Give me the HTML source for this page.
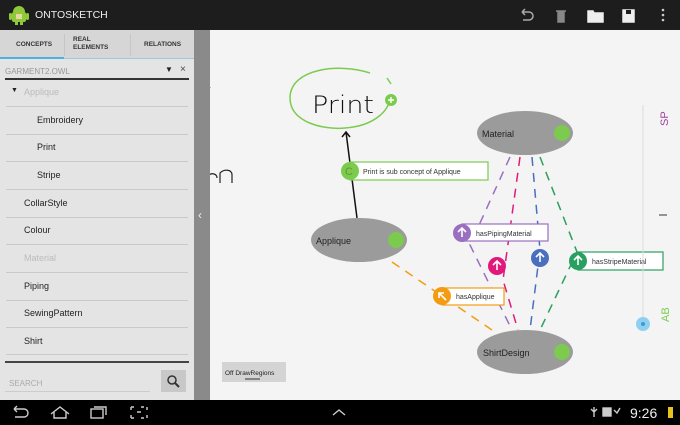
<!DOCTYPE html>
<html><head><meta charset="utf-8"><style>
*{margin:0;padding:0;box-sizing:border-box}
body{width:680px;height:425px;overflow:hidden;position:relative;background:#f4f4f4;font-family:"Liberation Sans",sans-serif}
.a{position:absolute}
#top{left:0;top:0;width:680px;height:30px;background:#1d1d1d}
#side{left:0;top:30px;width:194px;height:370px;background:#e4e4e4}
#bar{left:194px;top:30px;width:16px;height:370px;background:#8a8a8a}
.row{position:absolute;left:6px;width:182px;height:1px;background:#c9c9c9}
.it{position:absolute;font-size:9px;color:#222}
#bot{left:0;top:400px;width:680px;height:25px;background:#000}
</style></head><body>
<div class="a" id="top">
 <svg class="a" style="left:8px;top:4px" width="22" height="22" viewBox="0 0 22 22"><rect x="4" y="8" width="14" height="10" rx="2" fill="#8fc93a"/><path d="M5 8a6 6 0 0 1 12 0z" fill="#8fc93a"/><rect x="1" y="9" width="3" height="7" rx="1.5" fill="#8fc93a"/><rect x="18" y="9" width="3" height="7" rx="1.5" fill="#8fc93a"/><rect x="7" y="17" width="3" height="4" fill="#8fc93a"/><rect x="12" y="17" width="3" height="4" fill="#8fc93a"/><rect x="8" y="10" width="6" height="5" fill="#e8d7a0"/></svg>
 <div class="a" style="left:35px;top:9px;color:#eee;font-size:10.5px">ONTOSKETCH</div>
 <svg class="a" style="left:518px;top:7px" width="150" height="16" viewBox="0 0 150 16" fill="none" stroke="#aaa" stroke-width="1.5"><path d="M4 5h7a4 4 0 0 1 0 8H5M4 5l3-3M4 5l3 3"/><path d="M38 4h10M40 4v11h6V4" fill="#888" stroke="#888"/><path d="M70 4h5l1 2h9v9H70z" fill="#eee" stroke="#eee"/><rect x="105" y="3" width="11" height="12" fill="#eee" stroke="#eee"/><rect x="108" y="3" width="5" height="4" fill="#1d1d1d" stroke="none"/><circle cx="145" cy="3" r="1.3" fill="#ccc" stroke="none"/><circle cx="145" cy="8" r="1.3" fill="#ccc" stroke="none"/><circle cx="145" cy="13" r="1.3" fill="#ccc" stroke="none"/></svg>
</div>
<div class="a" id="side">
 <div class="a" style="left:0;top:0;width:194px;height:28px;background:#d6d6d6"></div>
 <div class="a" style="left:64px;top:4px;width:1px;height:22px;background:#c6c6c6"></div>
 <div class="a" style="left:130px;top:4px;width:1px;height:22px;background:#c6c6c6"></div>
 <div class="a" style="left:0;top:27px;width:64px;height:2px;background:#4bb3e0"></div>
 <div class="a" style="left:64px;top:28px;width:130px;height:1px;background:#9cc9dc"></div>
 <div class="it" style="left:16px;top:11px;font-size:6.5px;font-weight:bold;color:#333">CONCEPTS</div>
 <div class="it" style="left:73px;top:6px;font-size:6.5px;font-weight:bold;color:#333;line-height:8px">REAL<br>ELEMENTS</div>
 <div class="it" style="left:144px;top:11px;font-size:6.5px;font-weight:bold;color:#333">RELATIONS</div>
 <div class="it" style="left:5px;top:37px;font-size:8px;color:#999">GARMENT2.OWL</div>
 <div class="it" style="left:165px;top:35px;font-size:8px">▼</div>
 <div class="it" style="left:180px;top:34px;font-size:10px;color:#444">×</div>
 <div class="a" style="left:5px;top:48px;width:184px;height:2px;background:#333"></div>
 <div class="it" style="left:11px;top:57px;font-size:7px">▼</div>
 <div class="it" style="left:24px;top:57px;color:#bbb">Applique</div>
 <div class="row" style="top:76px"></div>
 <div class="it" style="left:37px;top:85px">Embroidery</div>
 <div class="row" style="top:104px"></div>
 <div class="it" style="left:37px;top:112px">Print</div>
 <div class="row" style="top:131px"></div>
 <div class="it" style="left:37px;top:140px">Stripe</div>
 <div class="row" style="top:159px"></div>
 <div class="it" style="left:24px;top:168px">CollarStyle</div>
 <div class="row" style="top:187px"></div>
 <div class="it" style="left:24px;top:195px">Colour</div>
 <div class="row" style="top:214px"></div>
 <div class="it" style="left:24px;top:223px;color:#bbb">Material</div>
 <div class="row" style="top:242px"></div>
 <div class="it" style="left:24px;top:251px">Piping</div>
 <div class="row" style="top:270px"></div>
 <div class="it" style="left:24px;top:278px">SewingPattern</div>
 <div class="row" style="top:297px"></div>
 <div class="it" style="left:24px;top:306px">Shirt</div>
 <div class="row" style="top:324px"></div>
 <div class="a" style="left:5px;top:331px;width:184px;height:2px;background:#444"></div>
 <div class="it" style="left:9px;top:349px;font-size:8px;color:#aaa">SEARCH</div>
 <div class="a" style="left:5px;top:361px;width:145px;height:1px;background:#ccc"></div>
 <div class="a" style="left:161px;top:340px;width:25px;height:22px;background:#c8c8c8"></div>
 <svg class="a" style="left:166px;top:344px" width="15" height="15"><circle cx="6" cy="6" r="4" fill="none" stroke="#333" stroke-width="1.5"/><path d="M9 9l4 4" stroke="#333" stroke-width="2"/></svg>
</div>
<div class="a" id="bar"><div class="a" style="left:4px;top:178px;color:#eee;font-size:12px">‹</div></div>
<svg class="a" style="left:210px;top:30px" width="470" height="370" viewBox="210 30 470 370">
 <path d="M205 80l5 8M207 180c0-8 10-8 10-2M220 183v-10c4-4 12-4 12 2v8" stroke="#222" fill="none" stroke-width="1.2"/>
 <path d="M370 73c-30-10-80-5-80 25 0 25 35 32 55 30 30-2 48-20 44-33" stroke="#7ccb4e" stroke-width="1.5" fill="none"/>
 <path d="M387 78l4 6" stroke="#7ccb4e" stroke-width="1.5"/>
 <text x="312" y="113" font-family="DejaVu Sans" font-weight="200" font-size="24" fill="#111" textLength="62" lengthAdjust="spacingAndGlyphs">Print</text>
 <circle cx="391" cy="100" r="6" fill="#7ccb4e"/><path d="M388 100h6M391 97v6" stroke="#fff" stroke-width="1.4"/>
 <path d="M357 218L346 132M342 137l4-5 4 5" stroke="#111" stroke-width="1.5" fill="none"/>
 <g stroke-width="1.5" stroke-dasharray="9 7" fill="none">
  <path d="M510 157L470 245L512 330" stroke="#9b6fc0"/>
  <path d="M520 157L503 280L518 330" stroke="#e0197a"/>
  <path d="M532 157L540 250L530 330" stroke="#4a6fbf"/>
  <path d="M540 157L577 252L540 330" stroke="#2aa060"/>
  <path d="M392 262L492 330" stroke="#f39c12"/>
 </g>
 <ellipse cx="525" cy="133" rx="48" ry="22" fill="#9b9b9b"/><circle cx="562" cy="133" r="8" fill="#7ccb4e"/>
 <text x="482" y="137" font-size="9" fill="#222">Material</text>
 <ellipse cx="359" cy="240" rx="48" ry="22" fill="#9b9b9b"/><circle cx="396" cy="240" r="8" fill="#7ccb4e"/>
 <text x="316" y="244" font-size="9" fill="#222">Applique</text>
 <ellipse cx="525" cy="352" rx="48" ry="22" fill="#9b9b9b"/><circle cx="562" cy="352" r="8" fill="#7ccb4e"/>
 <text x="483" y="356" font-size="9" fill="#222">ShirtDesign</text>
 <rect x="350" y="162" width="138" height="18" fill="#fff" stroke="#7ccb4e" stroke-width="1.2"/>
 <circle cx="350" cy="171" r="9" fill="#7ccb4e"/><text x="345" y="175" font-size="11" fill="#5a9a3a">C</text>
 <text x="363" y="174" font-size="7" fill="#333">Print is sub concept of Applique</text>
 <rect x="462" y="224" width="86" height="17" fill="#fff" stroke="#9b6fc0" stroke-width="1.2"/>
 <circle cx="462" cy="233" r="9" fill="#9b6fc0"/>
 <text x="476" y="236" font-size="7" fill="#333">hasPipingMaterial</text>
 <circle cx="497" cy="266" r="9" fill="#e0197a"/>
 <circle cx="540" cy="258" r="9" fill="#4a6fbf"/>
 <rect x="578" y="252" width="85" height="18" fill="#fff" stroke="#2aa060" stroke-width="1.2"/>
 <circle cx="578" cy="261" r="9" fill="#2aa060"/>
 <text x="592" y="264" font-size="7" fill="#333">hasStripeMaterial</text>
 <rect x="442" y="288" width="62" height="17" fill="#fff" stroke="#f39c12" stroke-width="1.2"/>
 <circle cx="442" cy="296" r="9" fill="#f39c12"/>
 <text x="456" y="299" font-size="7" fill="#333">hasApplique</text>
 <g stroke="#fff" stroke-width="1.6" fill="none">
  <path d="M462 237v-8M458 232l4-4 4 4"/><path d="M497 270v-8M493 265l4-4 4 4"/><path d="M540 262v-8M536 257l4-4 4 4"/><path d="M578 265v-8M574 260l4-4 4 4"/><path d="M446 300l-7-7M439 298v-5h5"/>
 </g>
 <path d="M643 105V320" stroke="#ddd" stroke-width="1"/>
 <text transform="translate(668,126) rotate(-90)" font-size="11" fill="#a040a0">SP</text>
 <path d="M659 215h8" stroke="#555" stroke-width="1.2"/>
 <text transform="translate(669,322) rotate(-90)" font-size="11" fill="#7ccb4e">AB</text>
 <circle cx="643" cy="324" r="7" fill="#8fd0f0"/><circle cx="643" cy="324" r="2" fill="#3a9bd8"/>
 <rect x="222" y="362" width="64" height="20" fill="#d4d4d4"/>
 <text x="225" y="375" font-size="6.5" fill="#222">Off DrawRegions</text>
 <path d="M245 379h15" stroke="#666" stroke-width="1.5"/>
</svg>
<div class="a" id="bot">
 <svg class="a" style="left:0;top:0" width="680" height="25" fill="none" stroke="#ccc" stroke-width="1.4">
  <path d="M14 9h10a4 4 0 0 1 0 8H15M14 9l3-3M14 9l3 3"/>
  <path d="M51 14l9-7 9 7M54 12v6h12v-6"/>
  <rect x="91" y="9" width="12" height="9"/><path d="M94 7h12v8"/>
  <path d="M131 7h3M141 7h3M131 18h3M141 18h3M131 7v3M147 7v3M131 15v3M147 15v3M137 12h4" />
  <path d="M333 15l6-5 6 5"/>
  <text x="630" y="18" font-size="14" fill="#eee" stroke="none" font-family="Liberation Sans">9:26</text>
  <path d="M594 7v10M591 9l3 3 3-3"/><rect x="603" y="8" width="8" height="8" fill="#ccc"/><path d="M614 10l3 3 3-5"/>
  <rect x="668" y="7" width="5" height="11" fill="#e8c020" stroke="none"/>
 </svg>
</div>
</body></html>
